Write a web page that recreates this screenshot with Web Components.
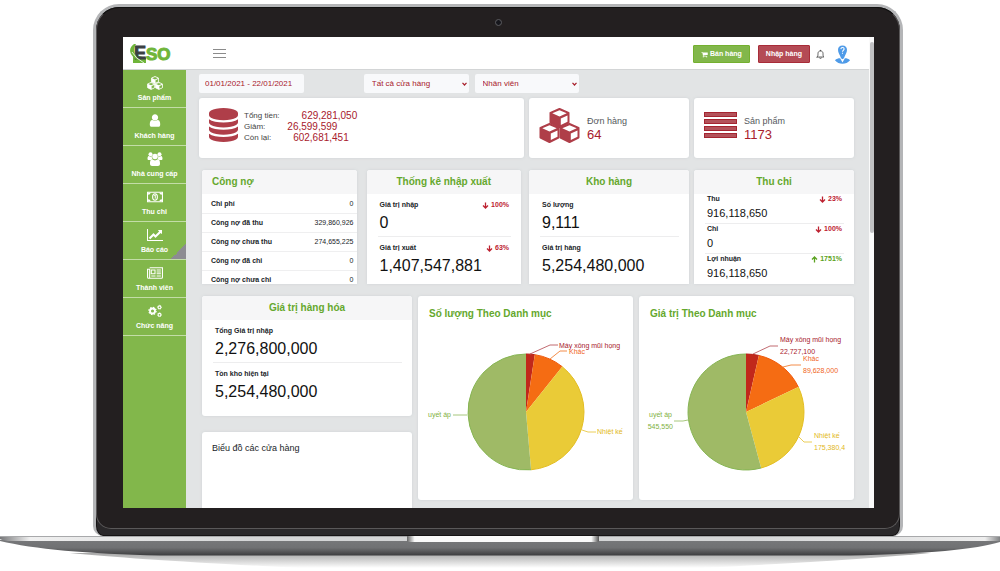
<!DOCTYPE html>
<html lang="vi">
<head>
<meta charset="utf-8">
<meta name="viewport" content="width=device-width, initial-scale=1">
<title>ESO</title>
<style>
  body { margin: 0; background: #fff; font-family: "Liberation Sans", Arial, sans-serif; color: #212529; }
</style>
</head>
<body>
<eso-laptop>
  <eso-app>
    <eso-topbar slot="top"></eso-topbar>
    <nav slot="side" aria-label="Menu">
      <eso-nav-item icon="cubes">Sản phẩm</eso-nav-item>
      <eso-nav-item icon="user">Khách hàng</eso-nav-item>
      <eso-nav-item icon="users">Nhà cung cấp</eso-nav-item>
      <eso-nav-item icon="money">Thu chi</eso-nav-item>
      <eso-nav-item icon="chart" current>Báo cáo</eso-nav-item>
      <eso-nav-item icon="news">Thành viên</eso-nav-item>
      <eso-nav-item icon="cogs">Chức năng</eso-nav-item>
    </nav>
    <eso-dashboard></eso-dashboard>
  </eso-app>
</eso-laptop>

<script>
const define = (name, html, setup) => {
  const template = document.createElement('template');
  template.innerHTML = html;
  customElements.define(name, class extends HTMLElement {
    connectedCallback() {
      if (this.shadowRoot) return;
      const root = this.attachShadow({ mode: 'open' });
      root.append(template.content.cloneNode(true));
      if (setup) setup(this, root);
    }
  });
};

/* Icons: [viewBox, markup] */
const cube = (x, y) => `<g transform="translate(${x} ${y})"><path d="M10 1 19 4.800V14.500L10 19 1 14.500V4.800Z" fill="currentColor" stroke="currentColor" stroke-width="2" stroke-linejoin="round"/><path d="M10 2.200 17.200 5.200 10 8.400 2.800 5.200Z M11.300 10.400 18 7.400V13.800L11.300 17Z" fill="var(--hole,#fff)"/></g>`;
const gear = (x, y, r) => `<circle cx="${x}" cy="${y}" r="${r}" fill="none" stroke="currentColor" stroke-width="${r * .75}"/><circle cx="${x}" cy="${y}" r="${r * 1.45}" fill="none" stroke="currentColor" stroke-width="${r * .5}" stroke-dasharray="${r * .57}"/>`;
const ICONS = {
  cubes: ['0 0 41 35', cube(10.500, 0) + cube(.5, 15) + cube(20.500, 15)],
  user: ['200 90 1392 1600', '<path fill="currentColor" d="M1536 1399q0 109-62.500 187t-150.500 78h-854q-88 0-150.500-78t-62.500-187q0-85 8.500-160.500t31.500-152 58.500-131 94-89 134.500-34.500q131 128 313 128t313-128q76 0 134.500 34.500t94 89 58.500 131 31.500 152 8.500 160.500zm-256-887q0 159-112.500 271.500t-271.500 112.500-271.500-112.500-112.500-271.500 112.500-271.500 271.500-112.500 271.500 112.500 112.500 271.500z"/>'],
  users: ['0 0 30 28', '<g fill="currentColor"><circle cx="6" cy="4.500" r="4"/><circle cx="24" cy="4.500" r="4"/><path d="M0 13c0-4 2-5 3-5 2 2 4 2 6 0-1 3 0 5 1 6-1 0-2 1-3 2H2c-1 0-2-1-2-3ZM30 13c0-4-2-5-3-5-2 2-4 2-6 0 1 3 0 5-1 6 1 0 2 1 3 2h5c1 0 2-1 2-3Z"/><circle cx="15" cy="9" r="5.500"/><path d="M9.500 14.500c3 3 8 3 11 0 4 0 4.500 5 4.500 9 0 3-2 4.500-4 4.500H9c-2 0-4-1.500-4-4.500 0-4 .5-9 4.500-9Z"/></g>'],
  money: ['0 0 30 20', '<path fill="none" stroke="currentColor" stroke-width="2" d="M1 1H29V19H1Z"/><path fill="currentColor" d="M2 2H7A5 5 0 0 1 2 6ZM28 2H23A5 5 0 0 0 28 6ZM2 18H7A5 5 0 0 0 2 14ZM28 18H23A5 5 0 0 1 28 14Z"/><ellipse cx="15" cy="10" rx="4.500" ry="6" fill="none" stroke="currentColor" stroke-width="2"/><path d="M13.500 7.500 15.500 6V13" fill="none" stroke="currentColor" stroke-width="1.800"/>'],
  chart: ['0 0 2048 1792', '<path fill="currentColor" d="M2048 1536v128h-2048v-1536h128v1408h1920zm-128-1248v435q0 21-19.500 29.500t-35.500-7.500l-121-121-633 633q-10 10-23 10t-23-10l-233-233-416 416-192-192 585-585q10-10 23-10t23 10l233 233 464-464-121-121q-16-16-7.500-35.500t29.500-19.500h435q14 0 23 9t9 23z"/>'],
  news: ['0 0 30 22', '<g fill="none" stroke="currentColor" stroke-width="2"><path d="M5 1H29V19Q29 21 27 21H3Q1 21 1 19V4H5V19Q5 21 3 21M8 5.500H15V12.500H8ZM18 5.500H26M18 9H26M18 12.500H26M8 16.500H16M18 16.500H26"/></g>'],
  cogs: ['0 0 30 28', gear(10, 14, 5) + gear(24, 6.500, 2.800) + gear(24, 21.500, 2.800)],
  database: ['128 0 1536 1792', '<path fill="currentColor" d="M896 768q237 0 443-43t325-127v170q0 69-103 128t-280 93.500-385 34.500-385-34.500-280-93.500-103-128v-170q119 84 325 127t443 43zm0 768q237 0 443-43t325-127v170q0 69-103 128t-280 93.500-385 34.500-385-34.500-280-93.500-103-128v-170q119 84 325 127t443 43zm0-384q237 0 443-43t325-127v170q0 69-103 128t-280 93.500-385 34.500-385-34.500-280-93.500-103-128v-170q119 84 325 127t443 43zm0-1152q208 0 385 34.500t280 93.500 103 128v128q0 69-103 128t-280 93.500-385 34.500-385-34.500-280-93.500-103-128v-128q0-69 103-128t280-93.500 385-34.500z"/>'],
  bars: ['0 0 33 27', '<path fill="#a52531" d="M0 0H33V5H0ZM0 7H33V12H0ZM0 14H33V19H0ZM0 21H33V26H0Z"/><path fill="#b3525a" d="M1 1H32V4H1ZM1 8H32V11H1ZM1 15H32V18H1ZM1 22H32V25H1Z"/>'],
  cart: ['0 100 1792 1600', '<path fill="currentColor" d="M704 1536q0 52-38 90t-90 38-90-38-38-90 38-90 90-38 90 38 38 90zm896 0q0 52-38 90t-90 38-90-38-38-90 38-90 90-38 90 38 38 90zm128-1088v512q0 24-16.500 42.500t-40.500 21.500l-1044 122q13 60 13 70 0 16-24 64h920q26 0 45 19t19 45-19 45-45 19h-1024q-26 0-45-19t-19-45q0-11 8-31.500t16-36 21.500-40 15.500-29.500l-177-823h-204q-26 0-45-19t-19-45 19-45 45-19h256q16 0 28.500 6.500t19.500 15.500 13 24.500 8 26 5.500 29.500 4.500 26h1201q26 0 45 19t19 45z"/>'],
  menu: ['0 0 13 10', '<path stroke="#8b8b8b" d="M0 .5H13M0 4.500H13M0 8.500H13"/>'],
  bell: ['0 0 16 18', '<path d="M8 1.500V2.500M2 13.500H14C12.500 12 12.500 10.500 12.500 7.500 12.500 4.500 10.500 2.500 8 2.500S3.500 4.500 3.500 7.500C3.500 10.500 3.500 12 2 13.500ZM6.500 15.500Q8 17 9.500 15.500" fill="none" stroke="#444" stroke-width="1.500" stroke-linecap="round" stroke-linejoin="round"/>'],
  avatar: ['0 0 36 40', '<g fill="#4f9be8"><path d="M18 1C12 1 8.500 5 8.500 10 8.500 15 11 19 13 23L15 28 18 30 21 28 23 23C25 19 27.500 15 27.500 10 27.500 5 24 1 18 1Z"/><path d="M2 32C5 29 9 28 13 28L18 37 23 28C27 28 31 29 34 32 30 37 24 39.500 18 39.500S6 37 2 32Z"/></g><path d="M14.500 8.500C15 4 21.500 4.500 21.500 8.500 21.500 11 18 11 18 14M18 16.500V18.500" fill="none" stroke="#fff" stroke-width="2.200"/>'],
  down: ['0 0 14 14', '<path d="M7 1V12M2 7 7 12 12 7" fill="none" stroke="currentColor" stroke-width="2.600"/>'],
  up: ['0 0 14 14', '<path d="M7 13V2M2 7 7 2 12 7" fill="none" stroke="currentColor" stroke-width="2.600"/>']
};

define('eso-icon', `<style>:host{display:block;flex:none}svg{display:block;width:100%;height:100%}</style>`, (el, root) => {
  const [box, body] = ICONS[el.getAttribute('name')];
  root.innerHTML += `<svg viewBox="${box}" aria-hidden="true">${body}</svg>`;
});

define('eso-laptop', `
<style>
  :host { display: block; padding-top: 4px; }
  .lid { margin: 0 9.7% 0 9.3%; box-sizing: border-box; border: 3px solid #b4b5b7; border-bottom: 0;
         border-radius: 26px 26px 10px 10px; background: #2a282a; padding-bottom: 7px; box-shadow: inset 0 0 0 1px #151314; }
  .bezel { border: 1px solid #5a5859; border-top-color: #111; border-radius: 23px 23px 15px 15px; background: #231f20; padding: 0 25px 20px 26px; }
  .camera { height: 29px; display: flex; align-items: center; justify-content: center; }
  .lens { width: 5px; height: 5px; border: 1px solid #5c5c60; border-radius: 50%; background: #16161c; }
  .screen { aspect-ratio: 751 / 471; overflow: hidden; background: #fff; }
  svg { display: block; width: 100%; height: 35px; }
</style>
<div class="lid"><div class="bezel">
  <div class="camera"><div class="lens"></div></div>
  <div class="screen"><slot></slot></div>
</div></div>
<svg viewBox="0 0 1000 35" preserveAspectRatio="none" aria-hidden="true">
  <defs>
    <linearGradient id="body" x2="0" y2="1"><stop offset="0" stop-color="#77787a"/><stop offset=".5" stop-color="#707173"/><stop offset="1" stop-color="#3c3c3e"/></linearGradient>
    <linearGradient id="top"><stop offset="0" stop-color="#77787a"/><stop offset=".03" stop-color="#f0f0f0"/><stop offset=".25" stop-color="#d4d5d6"/><stop offset=".75" stop-color="#d4d5d6"/><stop offset=".985" stop-color="#eee"/><stop offset="1" stop-color="#808183"/></linearGradient>
    <linearGradient id="notch"><stop offset="0" stop-color="#666"/><stop offset=".04" stop-color="#fafafa"/><stop offset=".96" stop-color="#fafafa"/><stop offset="1" stop-color="#555"/></linearGradient>
    <linearGradient id="shade" x2="0" y2="1"><stop offset="0" stop-color="#000" stop-opacity=".35"/><stop offset="1" stop-color="#000" stop-opacity="0"/></linearGradient>
  </defs>
  <path d="M70 17H930Q860 24 700 32H300Q140 24 70 17Z" fill="url(#shade)"/>
  <path d="M0 4H1000V6Q965 17 850 19.500H160Q50 17 0 5Z" fill="url(#body)"/>
  <path d="M0 0H1000V5H8Q1 4 0 3Z" fill="url(#top)"/>
  <path d="M0 .5H1000" stroke="#a8a9ab"/>
  <path d="M407 0H599V5Q599 6 596 6H410Q407 6 407 5Z" fill="url(#notch)"/>
</svg>`);

define('eso-app', `
<style>
  :host { display: flex; height: 100%; background: #fafafa; }
  .app { flex: 1; min-width: 0; display: flex; flex-direction: column; }
  .body { flex: 1; min-height: 0; display: flex; background: #e2e4e5; }
  .side { flex: none; width: 63px; background: #82b74b; }
  .main { flex: 1; min-width: 0; overflow: hidden; }
  .track { flex: none; width: 5px; padding-top: 5px; background: #fafafa; }
  .thumb { height: 41%; margin-left: 1px; border-radius: 3px; background: #c1c1c3; }
</style>
<div class="app"><slot name="top"></slot>
  <div class="body"><div class="side"><slot name="side"></slot></div><div class="main"><slot></slot></div></div>
</div>
<div class="track"><div class="thumb"></div></div>`);

define('eso-topbar', `
<style>
  :host { display: flex; align-items: center; flex: none; height: 33px; padding: 2px 18px 0 6px; box-sizing: border-box;
          background: #fff; border-bottom: 1px solid #d3d5d6; }
  .logo { display: block; width: 42px; height: 22px; }
  .logo svg { display: block; }
  button { font: bold 7px/16px "Liberation Sans", Arial, sans-serif; color: #fff; height: 18px; padding: 0 7px; border-radius: 1px;
           display: flex; align-items: center; gap: 2px; border: 1px solid #74b02f; background: #82b74b; white-space: nowrap; }
  .menu { border: 0; background: none; padding: 0; margin-left: 42px; margin-right: auto; }
  .red { border-color: #a82c38; background: #b44b55; margin: 0 6px 0 8px; }
  .plain { border: 0; background: none; padding: 0; }
  .menu eso-icon { width: 13px; height: 10px; }
  .cart { width: 7px; height: 7px; }
  .bell { width: 9px; height: 11px; }
  .avatar { width: 17px; height: 19px; margin-left: 9px; }
</style>
<a class="logo" href="#" aria-label="ESO"><svg width="42" height="22" viewBox="0 0 42 22">
  <text x="17" y="17" font-family="Liberation Sans, sans-serif" font-weight="bold" font-size="17" fill="#6fb53a" stroke="#6fb53a">SO</text>
  <path d="M4 11V20H17V15Z" fill="#6fb53a"/>
  <text x="5" y="16" font-family="Liberation Sans, sans-serif" font-weight="bold" font-size="18" fill="#3c4043" stroke="#3c4043">E</text>
  <path d="M5 1C-2 6 0 14 14 20 6 14 3 8 7 1Z" fill="#6fb53a"/>
  <path d="M3 9Q6 15 15 20" fill="none" stroke="#fff" stroke-width=".8"/>
</svg></a>
<button class="menu" aria-label="Menu"><eso-icon name="menu"></eso-icon></button>
<button><eso-icon class="cart" name="cart"></eso-icon>Bán hàng</button>
<button class="red">Nhập hàng</button>
<button class="plain" aria-label="Thông báo"><eso-icon class="bell" name="bell"></eso-icon></button>
<button class="plain" aria-label="Tài khoản"><eso-icon class="avatar" name="avatar"></eso-icon></button>`);

define('eso-nav-item', `
<style>
  :host { display: block; --hole: #82b74b; }
  a { display: flex; flex-direction: column; align-items: center; gap: 3px; height: 38px; box-sizing: border-box; padding-top: 6px;
      border-bottom: 1px solid #c3dda7; color: #fff; text-decoration: none; font: bold 7px/10px "Liberation Sans", Arial, sans-serif; white-space: nowrap; }
  :host([current]) a { background: linear-gradient(135deg, transparent 50%, #8d8c92 50%) right bottom / 15px 15px no-repeat; }
  eso-icon { width: 16px; height: 14px; }
  :host([icon=user]) eso-icon { height: 13px; margin-bottom: 1px; }
</style>
<a href="#"><slot></slot></a>`, (el, root) => {
  const icon = document.createElement('eso-icon');
  icon.setAttribute('name', el.getAttribute('icon'));
  root.querySelector('a').prepend(icon);
});

define('eso-card', `
<style>
  :host { display: block; min-width: 0; overflow: hidden; border-radius: 3px; background: #fff; box-shadow: 0 0 3px #cfd2d5; }
  h2 { margin: 0; height: 24px; background: #f6f6f7; color: #65a82d; font: bold 10px/24px "Liberation Sans", Arial, sans-serif; text-align: center; white-space: nowrap; }
  :host([start]) h2 { text-align: left; padding-left: 10px; }
  :host([plain]) h2 { background: none; text-align: left; padding: 6px 0 0 11px; }
</style>
<h2></h2><slot></slot>`, (el, root) => {
  const title = el.getAttribute('heading');
  if (title) root.querySelector('h2').textContent = title; else root.querySelector('h2').remove();
});

define('eso-stat', `
<style>
  :host { display: block; margin: 0 10px 0 11px; padding: 6px 2px 0; border-bottom: 1px solid #ededee; }
  :host(:last-child) { border-bottom-color: transparent; }
  :host([small]) { padding-top: 0; }
  .row { display: flex; justify-content: space-between; font: bold 7px/10px "Liberation Sans", Arial, sans-serif; }
  .value { font-size: 16px; line-height: 26px; color: #111; }
  :host([small]) .value { font-size: 11px; line-height: 19px; }
  .delta { display: flex; align-items: center; gap: 2px; color: #bd2130; }
  .delta.up { color: #5aa220; }
  eso-icon { width: 7px; height: 7px; }
</style>
<div class="row"><span class="label"></span></div><div class="value"><slot></slot></div>`, (el, root) => {
  root.querySelector('.label').textContent = el.getAttribute('label');
  const dir = el.hasAttribute('up') ? 'up' : 'down';
  const delta = el.getAttribute(dir);
  if (delta) root.querySelector('.row').insertAdjacentHTML('beforeend', `<span class="delta ${dir}"><eso-icon name="${dir}"></eso-icon><span>${delta}</span></span>`);
});

/* Pie chart: slices are given by their end angles, clockwise from the top. */
const PIES = {
  quantity: {
    cx: 98, ends: [8.7, 38.6, 175, 360],
    marks: `<g stroke="#b1454d"><path d="M102 29 122 20H130"/></g><path stroke="#f0701c" d="M122 34 132 26H139"/><path stroke="#e6c22e" d="M154 105 160 107H168"/><path stroke="#8fb95a" d="M25 90H39"/>`,
    labels: [[131, 22, '#a8202c', 'Máy xông mũi họng'], [141, 28, '#f0641c', 'Khác'], [169, 108, '#e2b822', 'Nhiệt kế'], [23, 91, '#7fb13f', 'uyết áp', 1]]
  },
  value: {
    cx: 97, ends: [12.8, 64.5, 164.9, 360],
    marks: `<path stroke="#b1454d" d="M104 29 121 21H129"/><path stroke="#f0701c" d="M134 42 142 40H152"/><path stroke="#e6c22e" d="M150 112 155 117H163"/><path stroke="#8fb95a" d="M39 95 34 96H25"/>`,
    labels: [[131, 16, '#a8202c', 'Máy xông mũi họng'], [131, 28, '#a8202c', '22,727,100'], [154, 35, '#f0641c', 'Khác'], [154, 47, '#f0641c', '89,628,000'], [165, 112, '#e2b822', 'Nhiệt kế'], [165, 124, '#e2b822', '175,380,4'], [23, 91, '#7fb13f', 'uyết áp', 1], [24, 103, '#7fb13f', '545,550', 1]]
  }
};
define('eso-pie', `<style>:host{display:block;margin:0 10px}svg{display:block;width:100%;overflow:visible;font-family:"Liberation Sans",Arial,sans-serif;font-size:7px}</style>`, (el, root) => {
  const { cx, ends, marks, labels } = PIES[el.getAttribute('data')];
  const cy = 86, r = 58;
  const point = a => `${(cx + r * Math.sin(a * Math.PI / 180)).toFixed(2)} ${(cy - r * Math.cos(a * Math.PI / 180)).toFixed(2)}`;
  const fills = [['#c1281b', '#b81f14'], ['#f56c13', '#f0580a'], ['#eacb37', '#e3bd22'], ['#9fba66', '#86b553']];
  const slices = ends.map((end, i) => {
    const start = i ? ends[i - 1] : 0;
    const arc = `A${r} ${r} 0 ${end - start > 180 ? 1 : 0} 1 ${point(end)}`;
    return `<path d="M${cx} ${cy}L${point(start)}${arc}Z" fill="${fills[i][0]}"/><path d="M${point(start)}${arc}" fill="none" stroke="${fills[i][1]}"/>`;
  }).join('');
  root.innerHTML += `<svg viewBox="0 0 195 165" role="img">${slices}<g fill="none" stroke-width=".8" transform="translate(0 -1)">${marks}</g>` +
    labels.map(([x, y, c, t, end]) => `<text x="${x}" y="${y}" fill="${c}"${end ? ' text-anchor="end"' : ''}>${t}</text>`).join('') + '</svg>';
});

define('eso-dashboard', `
<style>
  :host { display: block; padding: 4px 15px 0 13px; }
  .filters { display: flex; gap: 6px; }
  input, select { width: 16%; height: 19px; box-sizing: border-box; margin: 0; padding: 0 6px; border: 0; border-radius: 2px; background-color: #f8f9fb;
          color: #a8202c; font: 8px/19px "Liberation Sans", Arial, sans-serif; }
  input { margin-right: 54px; }
  select { appearance: none; padding: 0 8px; background-image: url("data:image/svg+xml,%3Csvg xmlns='http://www.w3.org/2000/svg' width='5' height='4' viewBox='0 0 5 4'%3E%3Cpath d='M.5 .8 2.500 3 4.500 .8' fill='none' stroke='%23a8202c' stroke-width='1.200'/%3E%3C/svg%3E"); background-repeat: no-repeat; background-position: right 2px center; }
  .totals { display: grid; grid-template-columns: 325fr 160fr 160fr; gap: 5px; margin-top: 5px; }
  .total { display: flex; align-items: center; height: 60px; box-sizing: border-box; padding: 0 10px 6px; gap: 7px; font-size: 9px; line-height: 12px; color: #55585c; }
  .total > div { padding-top: 6px; }
  .total.money { font-size: 8px; line-height: 11px; gap: 6px; }
  .total.money > div { padding-top: 2px; }
  .total strong { display: block; font-weight: normal; font-size: 13px; line-height: 15px; }
  strong, b, .total eso-icon { color: #a8202c; }
  .money div div { display: flex; gap: 22px; color: #444; }
  b { font-weight: normal; font-size: 10px; }
  .database { width: 29px; height: 34px; }
  .cubes { width: 41px; height: 35px; }
  .bars { width: 33px; height: 27px; }
  .total eso-icon.database, .total eso-icon.cubes { color: #af3e49; }
  .reports { display: grid; grid-template-columns: 325fr 160fr 160fr; gap: 5px; margin-top: 12px; height: 114px; }
  .pair { display: grid; grid-template-columns: 1fr 1fr; gap: 10px; padding: 0 3px; min-height: 0; }
  .reports eso-card { border-radius: 3px 3px 0 0; }
  table { width: 100%; margin-top: 1px; border-collapse: collapse; font-size: 7px; line-height: 18px; }
  tr { border-bottom: 1px solid #efeff0; }
  th, td { padding: 0 3px 0 9px; text-align: left; white-space: nowrap; }
  td { text-align: right; padding-left: 0; }
  .charts { display: grid; grid-template-columns: 210fr 215fr 215fr; gap: 6px; margin-top: 12px; padding-left: 3px; align-items: start; }
  .left { display: grid; gap: 16px; min-width: 0; }
  .goods { padding-bottom: 10px; }
  .shops p { margin: 0; padding: 10px 10px 90px; font-size: 9px; line-height: 12px; }
  .pie { padding-bottom: 9px; }
</style>
<div class="filters">
  <input type="text" value="01/01/2021 - 22/01/2021" aria-label="Khoảng ngày">
  <select aria-label="Cửa hàng"><option>Tất cả cửa hàng</option></select>
  <select aria-label="Nhân viên"><option>Nhân viên</option></select>
</div>
<div class="totals">
  <eso-card><div class="total money"><eso-icon class="database" name="database"></eso-icon><div>
    <div>Tổng tiền: <b>629,281,050</b></div><div>Giảm: <b>26,599,599</b></div><div>Còn lại: <b>602,681,451</b></div></div></div></eso-card>
  <eso-card><div class="total"><eso-icon class="cubes" name="cubes"></eso-icon><div>Đơn hàng<strong>64</strong></div></div></eso-card>
  <eso-card><div class="total"><eso-icon class="bars" name="bars"></eso-icon><div>Sản phẩm<strong>1173</strong></div></div></eso-card>
</div>
<div class="reports">
  <div class="pair">
    <eso-card heading="Công nợ" start><table>
      <tr><th scope="row">Chi phí</th><td>0</td></tr>
      <tr><th scope="row">Công nợ đã thu</th><td>329,860,926</td></tr>
      <tr><th scope="row">Công nợ chưa thu</th><td>274,655,225</td></tr>
      <tr><th scope="row">Công nợ đã chi</th><td>0</td></tr>
      <tr><th scope="row">Công nợ chưa chi</th><td>0</td></tr>
    </table></eso-card>
    <eso-card heading="Thống kê nhập xuất">
      <eso-stat label="Giá trị nhập" down="100%">0</eso-stat>
      <eso-stat label="Giá trị xuất" down="63%">1,407,547,881</eso-stat>
    </eso-card>
  </div>
  <eso-card heading="Kho hàng">
    <eso-stat label="Số lượng">9,111</eso-stat>
    <eso-stat label="Giá trị hàng">5,254,480,000</eso-stat>
  </eso-card>
  <eso-card heading="Thu chi">
    <eso-stat small label="Thu" down="23%">916,118,650</eso-stat>
    <eso-stat small label="Chi" down="100%">0</eso-stat>
    <eso-stat small label="Lợi nhuận" up="1751%">916,118,650</eso-stat>
  </eso-card>
</div>
<div class="charts">
  <div class="left">
    <eso-card class="goods" heading="Giá trị hàng hóa">
      <eso-stat label="Tổng Giá trị nhập">2,276,800,000</eso-stat>
      <eso-stat label="Tồn kho hiện tại">5,254,480,000</eso-stat>
    </eso-card>
    <eso-card class="shops"><p>Biểu đồ các cửa hàng</p></eso-card>
  </div>
  <eso-card class="pie" plain heading="Số lượng Theo Danh mục"><eso-pie data="quantity"></eso-pie></eso-card>
  <eso-card class="pie" plain heading="Giá trị Theo Danh mục"><eso-pie data="value"></eso-pie></eso-card>
</div>`);
</script>
</body>
</html>
